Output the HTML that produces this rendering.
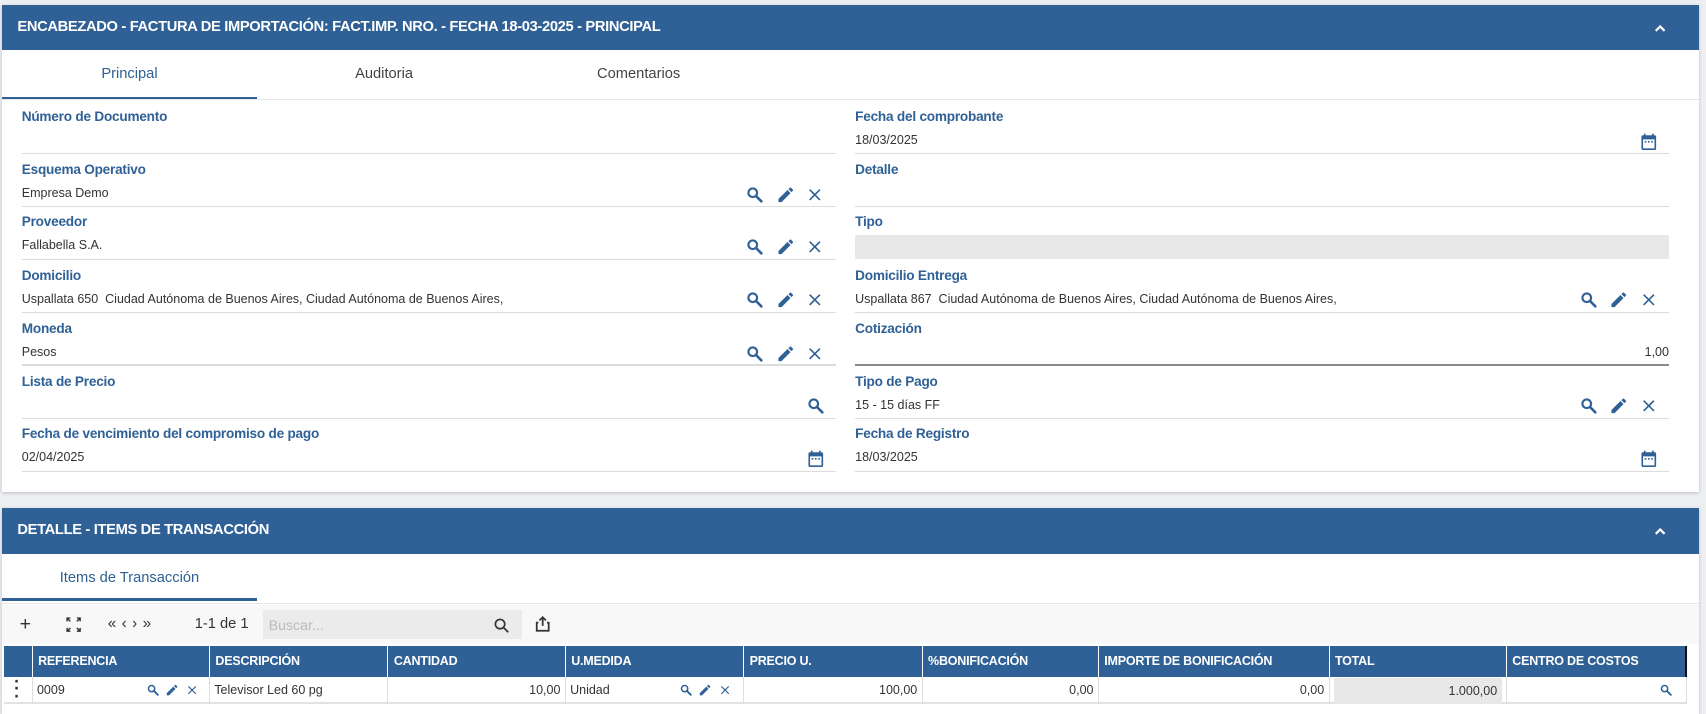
<!DOCTYPE html>
<html><head><meta charset="utf-8"><style>
*{box-sizing:border-box;margin:0;padding:0}
html,body{width:1706px;height:714px;overflow:hidden;background:#eceef1}
#root{zoom:1.088;width:1568px;height:657px;position:relative;font-family:"Liberation Sans",sans-serif}
.abs{position:absolute}
.card{position:absolute;left:2px;width:1560px;background:#fff;box-shadow:0 1px 3px rgba(0,0,0,.2)}
.hdr{position:absolute;left:0;right:0;background:#2f6196;color:#fff;font-weight:bold;font-size:13.5px;letter-spacing:-0.3px;padding-left:14px}
.lbl{position:absolute;color:#2f6196;font-weight:bold;font-size:12.5px;letter-spacing:-0.2px}
.val{position:absolute;color:#333;font-size:11.5px}
.ln{position:absolute;height:1px;background:#dcdcdc}
.ic{position:absolute}
.th{position:absolute;top:0;height:28px;color:#fff;font-weight:bold;font-size:11.5px;padding:7px 0 0 5px;border-right:1px solid #fff;letter-spacing:-0.2px}
.td{position:absolute;top:0;height:25px;font-size:11.5px;color:#333;padding:6px 4px;border-right:1px solid #ddd}
</style></head><body><div id="root">
<svg width="0" height="0" style="position:absolute"><defs>
<symbol id="s" viewBox="0 0 24 24"><circle cx="9.5" cy="9.5" r="5.3" fill="none" stroke="#2f6196" stroke-width="2.6"/><path d="M13.5 13.5 20 20" stroke="#2f6196" stroke-width="3.2" stroke-linecap="round"/></symbol>
<symbol id="p" viewBox="0 0 24 24"><path fill="#2f6196" d="M3 17.2V21h3.8L17.8 9.9l-3.7-3.7L3 17.2zM20.7 7a1 1 0 0 0 0-1.4l-2.3-2.3a1 1 0 0 0-1.4 0l-1.8 1.8 3.7 3.7L20.7 7z"/></symbol>
<symbol id="x" viewBox="0 0 24 24"><path fill="#2f6196" d="M19 6.4 17.6 5 12 10.6 6.4 5 5 6.4 10.6 12 5 17.6 6.4 19 12 13.4 17.6 19 19 17.6 13.4 12z"/></symbol>
<symbol id="c" viewBox="0 0 24 24"><path fill="#2f6196" d="M19 4h-1V2h-2v2H8V2H6v2H5a2 2 0 0 0-2 2v14a2 2 0 0 0 2 2h14a2 2 0 0 0 2-2V6a2 2 0 0 0-2-2zm0 16H5V9h14v11zM7 11h2v2H7zm4 0h2v2h-2zm4 0h2v2h-2z"/></symbol>
<symbol id="u" viewBox="0 0 24 24"><path fill="none" stroke="#fff" stroke-width="3.2" d="M5.5 16 12 9.5 18.5 16"/></symbol>
</defs></svg>

<div class="card" style="top:5px;height:447px">
 <div class="hdr" style="top:0;height:41px;line-height:41px">ENCABEZADO - FACTURA DE IMPORTACIÓN: FACT.IMP. NRO. - FECHA 18-03-2025 - PRINCIPAL
  <svg class="ic" style="left:1516px;top:13px" width="15" height="15"><use href="#u"/></svg></div>
 <div class="abs" style="top:41px;left:0;right:0;height:46px;border-bottom:1px solid #e6e6e6;font-size:13.5px">
  <div class="abs" style="left:0;width:234px;text-align:center;top:15px;color:#2f6196">Principal</div>
  <div class="abs" style="left:234px;width:234px;text-align:center;top:15px;color:#444">Auditoria</div>
  <div class="abs" style="left:468px;width:234px;text-align:center;top:15px;color:#444">Comentarios</div>
  <div class="abs" style="left:0;width:234px;top:43px;height:2px;background:#2f6196"></div>
 </div>
</div>

<div class="abs" style="left:0;top:0;width:1568px;height:460px">
 <div class="lbl" style="left:20px;top:100px">Número de Documento</div><div class="ln" style="left:20px;width:748px;top:141px"></div>
 <div class="lbl" style="left:20px;top:149px">Esquema Operativo</div><div class="val" style="left:20px;top:171px">Empresa Demo</div><div class="ln" style="left:20px;width:748px;top:189px"></div>
 <div class="lbl" style="left:20px;top:197px">Proveedor</div><div class="val" style="left:20px;top:219px">Fallabella S.A.</div><div class="ln" style="left:20px;width:748px;top:238px"></div>
 <div class="lbl" style="left:20px;top:246px">Domicilio</div><div class="val" style="left:20px;top:268px">Uspallata 650&nbsp; Ciudad Autónoma de Buenos Aires, Ciudad Autónoma de Buenos Aires,</div><div class="ln" style="left:20px;width:748px;top:287px"></div>
 <div class="lbl" style="left:20px;top:295px">Moneda</div><div class="val" style="left:20px;top:317px">Pesos</div><div class="ln" style="left:20px;width:748px;top:335px"></div>
 <div class="lbl" style="left:20px;top:344px">Lista de Precio</div><div class="ln" style="left:20px;width:748px;top:384px"></div>
 <div class="lbl" style="left:20px;top:392px">Fecha de vencimiento del compromiso de pago</div><div class="val" style="left:20px;top:414px">02/04/2025</div><div class="ln" style="left:20px;width:748px;top:433px"></div>

 <div class="lbl" style="left:786px;top:100px">Fecha del comprobante</div><div class="val" style="left:786px;top:122px">18/03/2025</div><div class="ln" style="left:786px;width:748px;top:141px"></div>
 <div class="lbl" style="left:786px;top:149px">Detalle</div><div class="ln" style="left:786px;width:748px;top:189px"></div>
 <div class="lbl" style="left:786px;top:197px">Tipo</div><div class="abs" style="left:786px;width:748px;top:216px;height:22px;background:#e8e8e8"></div>
 <div class="lbl" style="left:786px;top:246px">Domicilio Entrega</div><div class="val" style="left:786px;top:268px">Uspallata 867&nbsp; Ciudad Autónoma de Buenos Aires, Ciudad Autónoma de Buenos Aires,</div><div class="ln" style="left:786px;width:748px;top:287px"></div>
 <div class="lbl" style="left:786px;top:295px">Cotización</div><div class="val" style="left:1400px;width:134px;text-align:right;top:317px">1,00</div><div class="ln" style="left:786px;width:748px;top:335px;background:#8a8a8a"></div>
 <div class="lbl" style="left:786px;top:344px">Tipo de Pago</div><div class="val" style="left:786px;top:366px">15 - 15 días FF</div><div class="ln" style="left:786px;width:748px;top:384px"></div>
 <div class="lbl" style="left:786px;top:392px">Fecha de Registro</div><div class="val" style="left:786px;top:414px">18/03/2025</div><div class="ln" style="left:786px;width:748px;top:433px"></div>

 <svg class="ic" style="left:1506px;top:121px" width="18" height="18"><use href="#c"/></svg>
 <svg class="ic" style="left:741px;top:413px" width="18" height="18"><use href="#c"/></svg>
 <svg class="ic" style="left:1506px;top:413px" width="18" height="18"><use href="#c"/></svg>
 <svg class="ic" style="left:741px;top:364px" width="18" height="18"><use href="#s"/></svg>
 <svg class="ic" style="left:685px;top:170px" width="18" height="18"><use href="#s"/></svg><svg class="ic" style="left:713px;top:170px" width="18" height="18"><use href="#p"/></svg><svg class="ic" style="left:740px;top:170px" width="18" height="18"><use href="#x"/></svg>
 <svg class="ic" style="left:685px;top:218px" width="18" height="18"><use href="#s"/></svg><svg class="ic" style="left:713px;top:218px" width="18" height="18"><use href="#p"/></svg><svg class="ic" style="left:740px;top:218px" width="18" height="18"><use href="#x"/></svg>
 <svg class="ic" style="left:685px;top:267px" width="18" height="18"><use href="#s"/></svg><svg class="ic" style="left:713px;top:267px" width="18" height="18"><use href="#p"/></svg><svg class="ic" style="left:740px;top:267px" width="18" height="18"><use href="#x"/></svg>
 <svg class="ic" style="left:685px;top:316px" width="18" height="18"><use href="#s"/></svg><svg class="ic" style="left:713px;top:316px" width="18" height="18"><use href="#p"/></svg><svg class="ic" style="left:740px;top:316px" width="18" height="18"><use href="#x"/></svg>
 <svg class="ic" style="left:1451px;top:267px" width="18" height="18"><use href="#s"/></svg><svg class="ic" style="left:1479px;top:267px" width="18" height="18"><use href="#p"/></svg><svg class="ic" style="left:1506px;top:267px" width="18" height="18"><use href="#x"/></svg>
 <svg class="ic" style="left:1451px;top:364px" width="18" height="18"><use href="#s"/></svg><svg class="ic" style="left:1479px;top:364px" width="18" height="18"><use href="#p"/></svg><svg class="ic" style="left:1506px;top:364px" width="18" height="18"><use href="#x"/></svg>
</div>

<div class="card" style="top:467px;height:190px">
 <div class="hdr" style="top:0;height:42px;line-height:42px">DETALLE - ITEMS DE TRANSACCIÓN
  <svg class="ic" style="left:1516px;top:14px" width="15" height="15"><use href="#u"/></svg></div>
 <div class="abs" style="top:42px;left:0;right:0;height:46px;border-bottom:1px solid #e6e6e6">
  <div class="abs" style="left:0;width:234px;text-align:center;top:15px;color:#2f6196;font-size:13.5px">Items de Transacción</div>
  <div class="abs" style="left:0;width:234px;top:41px;height:2px;background:#2f6196"></div>
 </div>
 <div class="abs" style="top:89px;left:0;right:0;height:36px;background:#f8f8f8;color:#333">
  <div class="abs" style="left:16px;top:7px;font-size:18px">+</div>
  <svg class="ic" style="left:59px;top:11px" width="14" height="14" viewBox="0 0 14 14"><path fill="none" stroke="#333" stroke-width="1.3" d="M1 4V1h3M10 1h3v3M13 10v3h-3M4 13H1v-3M1 1l3 3M13 1l-3 3M13 13l-3-3M1 13l3-3"/></svg>
  <div class="abs" style="left:97px;top:9px;font-size:14px;letter-spacing:5px">«‹›»</div>
  <div class="abs" style="left:177px;top:10px;font-size:13.5px">1-1 de 1</div>
  <div class="abs" style="left:240px;top:5px;width:238px;height:26px;background:#ebebeb;color:#bbb;font-size:13px;padding:6px 5px">Buscar...</div>
  <svg class="ic" style="left:451px;top:11px" width="16" height="16" viewBox="0 0 16 16"><circle cx="6.5" cy="6.5" r="4.3" fill="none" stroke="#333" stroke-width="1.5"/><path d="M9.7 9.7 14 14" stroke="#333" stroke-width="1.6"/></svg>
  <svg class="ic" style="left:489px;top:9px" width="16" height="16" viewBox="0 0 16 16"><path fill="none" stroke="#333" stroke-width="1.6" d="M8 10V2M5 5l3-3 3 3M4 7H2.5v7.5h11V7H12"/></svg>
 </div>
 <div class="abs" style="top:127px;left:2px;width:1547px;height:28px;background:#2f6196">
  <div class="th" style="left:0;width:26px"></div>
  <div class="th" style="left:26px;width:163px">REFERENCIA</div>
  <div class="th" style="left:189px;width:164px">DESCRIPCIÓN</div>
  <div class="th" style="left:353px;width:163px">CANTIDAD</div>
  <div class="th" style="left:516px;width:164px">U.MEDIDA</div>
  <div class="th" style="left:680px;width:164px">PRECIO U.</div>
  <div class="th" style="left:844px;width:162px">%BONIFICACIÓN</div>
  <div class="th" style="left:1006px;width:212px">IMPORTE DE BONIFICACIÓN</div>
  <div class="th" style="left:1218px;width:163px">TOTAL</div>
  <div class="th" style="left:1381px;width:166px;border-right:2px solid #111">CENTRO DE COSTOS</div>
 </div>
 <div class="abs" style="top:155px;left:2px;width:1547px;height:25px;background:#fff;border-bottom:2px solid #e2e2e2">
  <div class="td" style="left:0;width:26px;font-size:16px;font-weight:bold;padding:1px 9px;line-height:7px">·<br>·<br>·</div>
  <div class="td" style="left:26px;width:163px">0009
   <svg class="ic" style="left:104px;top:6px" width="13" height="13"><use href="#s"/></svg><svg class="ic" style="left:122px;top:6px" width="13" height="13"><use href="#p"/></svg><svg class="ic" style="left:140px;top:6px" width="13" height="13"><use href="#x"/></svg></div>
  <div class="td" style="left:189px;width:164px">Televisor Led 60 pg</div>
  <div class="td" style="left:353px;width:163px;text-align:right">10,00</div>
  <div class="td" style="left:516px;width:164px">Unidad
   <svg class="ic" style="left:104px;top:6px" width="13" height="13"><use href="#s"/></svg><svg class="ic" style="left:122px;top:6px" width="13" height="13"><use href="#p"/></svg><svg class="ic" style="left:140px;top:6px" width="13" height="13"><use href="#x"/></svg></div>
  <div class="td" style="left:680px;width:164px;text-align:right">100,00</div>
  <div class="td" style="left:844px;width:162px;text-align:right">0,00</div>
  <div class="td" style="left:1006px;width:212px;text-align:right">0,00</div>
  <div class="td" style="left:1218px;width:163px;text-align:right"><div class="abs" style="left:4px;right:4px;top:1px;bottom:0;background:#e8e8e8;padding:6px 4px 0 0">1.000,00</div></div>
  <div class="td" style="left:1381px;width:166px"><svg class="ic" style="left:140px;top:6px" width="13" height="13"><use href="#s"/></svg></div>
 </div>
</div>
</div></body></html>
